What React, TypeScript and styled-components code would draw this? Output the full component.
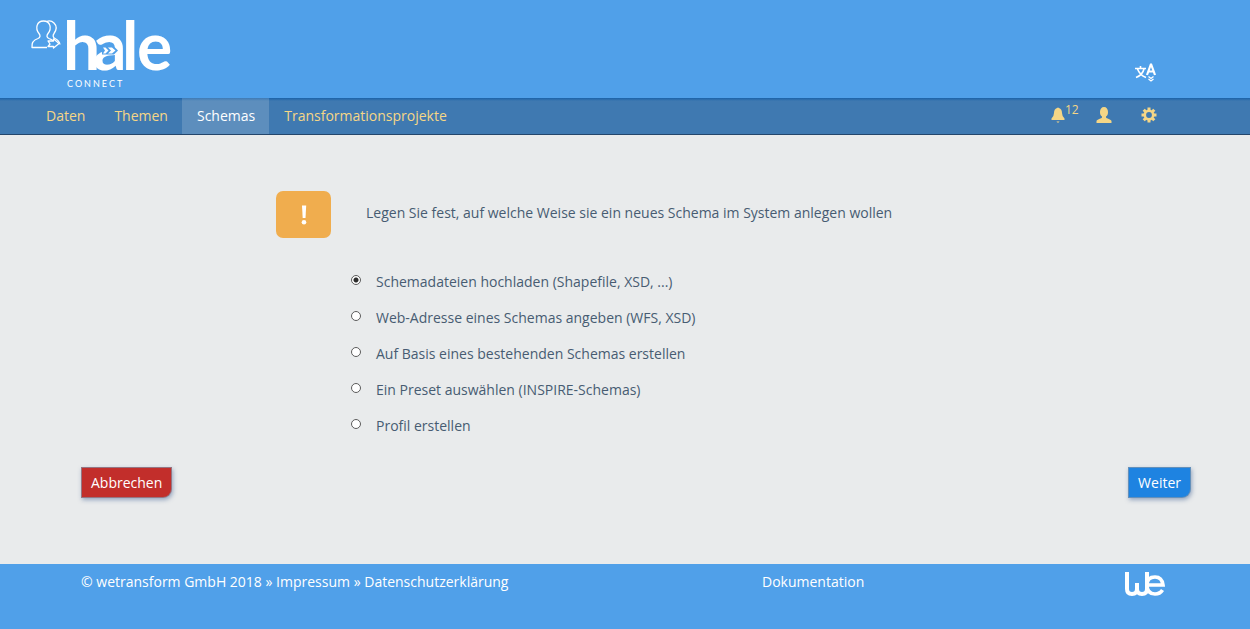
import React, { useState } from "react";
import styled, { createGlobalStyle } from "styled-components";

const GlobalStyle = createGlobalStyle`
  *, *::before, *::after { box-sizing: border-box; }
  body {
    margin: 0;
    background: #e9ebec;
    color: #475c72;
    font: 14px/20px "Open Sans", "Noto Sans", sans-serif;
  }
`;

const Page = styled.div`
  display: flex;
  flex-direction: column;
  min-height: 100vh;
`;

const Header = styled.header`
  display: flex;
  justify-content: space-between;
  align-items: flex-end;
  height: 98px;
  padding: 0 93px 10px 30px;
  background: #50a0e9;
`;

const LogoLink = styled.a`
  display: block;
  height: 72px;
`;

const LogoDrawing = styled.svg`
  display: block;
  overflow: visible;
`;

const IconButton = styled.button`
  display: flex;
  align-items: center;
  padding: 0;
  border: 0;
  background: none;
  color: inherit;
  font: inherit;
  cursor: pointer;
`;

const LanguageButton = styled(IconButton)`
  margin-bottom: 5px;
`;

const NavBar = styled.nav`
  display: flex;
  justify-content: space-between;
  height: 37px;
  padding: 0 93px 0 31px;
  background: linear-gradient(#1a62a8, #3f79b1 3px);
  border-bottom: 1px solid #24466b;
`;

const NavGroup = styled.div`
  display: flex;
`;

const NavLink = styled.a<{ $active?: boolean }>`
  padding: 8px 14px 8px 15px;
  color: ${(p) => (p.$active ? "#ffffff" : "#f5d686")};
  background: ${(p) => (p.$active ? "rgba(255, 255, 255, 0.16)" : "transparent")};
  text-decoration: none;
`;

const NavTools = styled.div`
  display: grid;
  grid-template-columns: 45px 45px 16px;
  align-items: center;
  padding-bottom: 3px;
  color: #f5d686;
`;

const Count = styled.span`
  align-self: flex-start;
  margin-top: -4px;
  font-size: 12px;
  line-height: 14px;
`;

const Main = styled.main`
  flex: 1;
  padding: 56px 59px 40px 81px;
`;

const Intro = styled.div`
  display: flex;
  align-items: center;
  gap: 35px;
  margin-left: 195px;
`;

const Alert = styled.div`
  display: flex;
  align-items: center;
  justify-content: center;
  width: 55px;
  height: 47px;
  border-radius: 7px;
  background: #f0ad4e;
`;

const IntroText = styled.p`
  margin: 0;
  padding-bottom: 4px;
`;

const Options = styled.fieldset`
  display: grid;
  gap: 16px;
  margin: 34px 0 31px 270px;
  padding: 0;
  border: 0;
`;

const Option = styled.label`
  display: flex;
  align-items: center;
  gap: 15px;
`;

const Radio = styled.input`
  appearance: none;
  width: 10px;
  height: 10px;
  margin: 0 0 5px;
  border: 1px solid #5c5c5c;
  border-radius: 50%;
  background: #ffffff;
  &:checked {
    background: radial-gradient(circle, #2b2b2b 0 2px, #ffffff 3px);
  }
`;

const Actions = styled.div`
  display: flex;
  justify-content: space-between;
`;

const ActionButton = styled.button<{ $color: string }>`
  height: 31px;
  padding: 0 9px;
  border: 1px solid rgba(130, 150, 170, 0.7);
  border-radius: 0 0 9px 0;
  background: ${(p) => p.$color};
  color: #ffffff;
  font: inherit;
  box-shadow: 1px 2px 4px rgba(70, 100, 150, 0.5);
  cursor: pointer;
`;

const Footer = styled.footer`
  display: grid;
  grid-template-columns: 681px 1fr auto;
  align-items: start;
  height: 65px;
  padding: 8px 84px 0 81px;
  background: #50a0e9;
  color: #ffffff;
`;

const FooterLink = styled.a`
  color: inherit;
  text-decoration: none;
`;

const HaleLogo = () => (
  <LogoDrawing width="144" height="72" viewBox="0 0 144 72" role="img" aria-label="hale connect">
    <g fill="none" stroke="#fff" strokeWidth="1.3" strokeLinejoin="round">
      <path d="M17 31.500H2C1.500 27 3 24 8 22.500C10.500 21.500 10.500 19.500 9 17.500C5 12.500 6.500 5 13.500 5C20.500 5 22 12.500 18 17.500C16.500 19.500 16.500 21.500 19 22.500C22 23.500 23.500 25 24 26.500" />
      <path d="M16.500 5.500C19 4.500 22 5 24 7C27 10 26.500 14 24 17.500C22.500 19.500 23 21.500 25 22.500C28 24 29.500 25.500 30 28.500" />
      <path d="M18 25H23.500V22.800L29 27.500L23.500 32V30.500H18L20 28Z" fill="#50a0e9" />
    </g>
    <text x="33 63 92 107" y="54" fill="#fff" fontFamily="Lato, sans-serif" fontWeight="700" fontSize="66">
      hale
    </text>
    <path d="M72 30.500H84L88 34.500L84 38.500H72Z" fill="#50a0e9" />
    <path d="M73 31.500H75.500L78.500 34.500L75.500 37.500H73L75 34.500ZM78 31.500H82L85.500 34.500L82 37.500H78L81 34.500Z" fill="#fff" />
    <text x="37" y="71" fill="#fff" fontFamily="Lato, sans-serif" fontSize="9" letterSpacing="2">
      CONNECT
    </text>
  </LogoDrawing>
);

const LanguageIcon = () => (
  <svg width="22" height="20" viewBox="0 0 22 20" fill="none" stroke="#fff" aria-hidden="true">
    <path d="M0 5.500H11M5.500 3V5.500M9 6C8 10 5 13 1 14.500M2.500 6C4 10 7 13 11 14.500" strokeWidth="1.600" />
    <path d="M12 12L15.800 1.500H16.200L20 12M13.500 8.500H18.500" strokeWidth="2.200" />
    <path d="M13.500 13.500L16 15.500L18.500 13.500M13.500 16L16 18L18.500 16" strokeWidth="1.300" />
  </svg>
);

const BellIcon = () => (
  <svg width="14" height="16" viewBox="0 0 14 16" fill="currentColor" aria-hidden="true">
    <path d="M6 1Q7 0 8 1Q11 2 11 6Q11 9 13.500 11.500V13H0.500V11.500Q3 9 3 6Q3 2 6 1ZM5.500 14.500H8.500L7.800 15.500H6.200Z" />
  </svg>
);

const UserIcon = () => (
  <svg width="16" height="16" viewBox="0 0 16 16" fill="currentColor" aria-hidden="true">
    <path d="M8 0C10.500 0 12 2 12 5C12 7 11.500 8.500 10 9.500V10.500C10 11.200 15.500 12.500 15.500 14V16H0.500V14C0.500 12.500 6 11.200 6 10.500V9.500C4.500 8.500 4 7 4 5C4 2 5.500 0 8 0Z" />
  </svg>
);

const GearIcon = () => (
  <svg width="16" height="16" viewBox="0 0 16 16" aria-hidden="true">
    <g fill="none" stroke="currentColor">
      <circle cx="8" cy="8" r="4.200" strokeWidth="2.600" />
      <path
        d="M8 0.500V3M8 13V15.500M0.500 8H3M13 8H15.500M2.700 2.700L4.500 4.500M11.500 11.500L13.300 13.300M2.700 13.300L4.500 11.500M11.500 4.500L13.300 2.700"
        strokeWidth="3"
      />
    </g>
  </svg>
);

const ExclamationMark = () => (
  <svg width="8" height="20" viewBox="0 0 8 20" fill="#fff" aria-hidden="true">
    <path d="M2 0.500H6.200L5.500 13H2.700Z" />
    <circle cx="4" cy="17.300" r="2.300" />
  </svg>
);

const WeLogo = () => (
  <svg width="42" height="26" viewBox="0 0 42 26" role="img" aria-label="wetransform">
    <g fill="none" stroke="#fff" strokeWidth="4">
      <path d="M3 0V17Q3 22 8 22Q13 22 13 17V11M13 17Q13 22 18 22Q23 22 23 17V0" />
      <path d="M23 13H39Q38 5 31 5Q23 5 23 13Q23 22 31 22Q36 22 38.500 18" strokeWidth="3.600" />
    </g>
  </svg>
);

const menu = ["Daten", "Themen", "Schemas", "Transformationsprojekte"];

const choices = [
  "Schemadateien hochladen (Shapefile, XSD, ...)",
  "Web-Adresse eines Schemas angeben (WFS, XSD)",
  "Auf Basis eines bestehenden Schemas erstellen",
  "Ein Preset auswählen (INSPIRE-Schemas)",
  "Profil erstellen",
];

export default function App() {
  const [selected, setSelected] = useState(0);
  return (
    <Page>
      <GlobalStyle />
      <Header>
        <LogoLink href="#">
          <HaleLogo />
        </LogoLink>
        <LanguageButton aria-label="Sprache">
          <LanguageIcon />
        </LanguageButton>
      </Header>
      <NavBar>
        <NavGroup>
          {menu.map((item) => (
            <NavLink key={item} href="#" $active={item === "Schemas"}>
              {item}
            </NavLink>
          ))}
        </NavGroup>
        <NavTools>
          <IconButton aria-label="Benachrichtigungen">
            <BellIcon />
            <Count>12</Count>
          </IconButton>
          <IconButton aria-label="Benutzer">
            <UserIcon />
          </IconButton>
          <IconButton aria-label="Einstellungen">
            <GearIcon />
          </IconButton>
        </NavTools>
      </NavBar>
      <Main>
        <Intro>
          <Alert>
            <ExclamationMark />
          </Alert>
          <IntroText>Legen Sie fest, auf welche Weise sie ein neues Schema im System anlegen wollen</IntroText>
        </Intro>
        <Options aria-label="Schema anlegen">
          {choices.map((choice, i) => (
            <Option key={choice}>
              <Radio type="radio" name="source" checked={selected === i} onChange={() => setSelected(i)} />
              {choice}
            </Option>
          ))}
        </Options>
        <Actions>
          <ActionButton $color="#c22e2b">Abbrechen</ActionButton>
          <ActionButton $color="#1e83e1">Weiter</ActionButton>
        </Actions>
      </Main>
      <Footer>
        <span>
          © wetransform GmbH 2018 » <FooterLink href="#">Impressum</FooterLink> »{" "}
          <FooterLink href="#">Datenschutzerklärung</FooterLink>
        </span>
        <FooterLink href="#">Dokumentation</FooterLink>
        <WeLogo />
      </Footer>
    </Page>
  );
}
